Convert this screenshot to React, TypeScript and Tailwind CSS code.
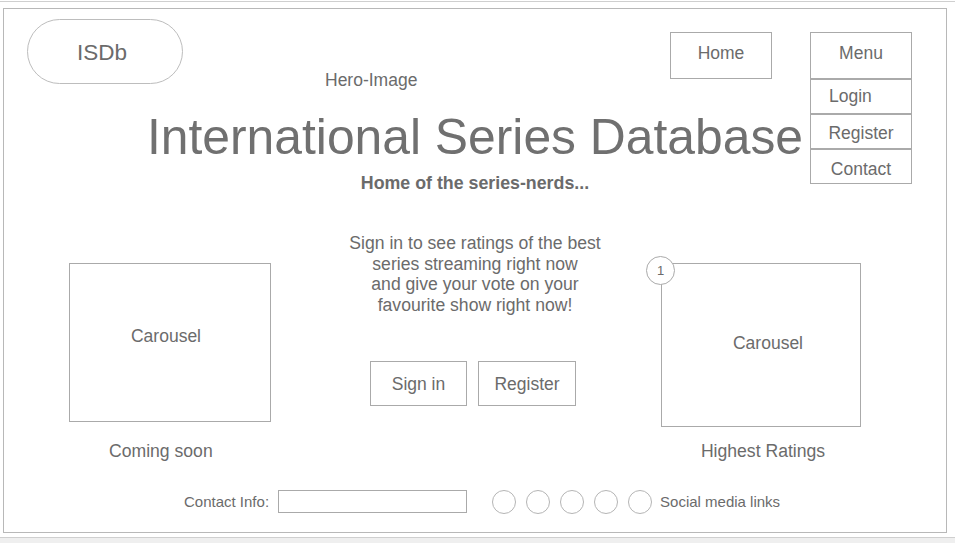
const font = { fontFamily: '"Liberation Sans", Arial, Helvetica, sans-serif' };

const App = () => {
  return (
    <div
      className="w-[955px] h-[543px] bg-white flex flex-col overflow-hidden text-[#6b6b6b]"
      style={font}
    >
      <div className="mt-[1px] h-px bg-[#cfcfcf]" />

      {/* wireframe frame */}
      <div className="ml-[3px] mt-[6px] w-[944px] h-[525px] border border-[#b8b8b8] flex flex-col">
        {/* header */}
        <div className="flex items-start">
          <div className="ml-[23px] mt-[10px] w-[156px] h-[65px] rounded-full border border-[#bdbdbd] flex items-center justify-center text-[22.5px] pt-[2px] pr-[6px]">
            ISDb
          </div>
          <div className="ml-[142px] mt-[61px] text-[17.5px] leading-[20px]">Hero-Image</div>
          <div className="flex-1" />
          <div className="mt-[23px] mr-[38px] w-[102px] h-[47px] border border-[#aaa] flex items-center justify-center text-[17.5px] pb-[4px]">
            Home
          </div>
          <div className="mt-[23px] mr-[34px] w-[102px] relative">
            <div className="h-[47px] border border-[#aaa] flex items-center justify-center text-[17.5px] pb-[4px]">
              Menu
            </div>
            <div className="absolute top-full left-0 w-full flex flex-col text-[17.5px] bg-white">
              <div className="h-[35px] border border-[#aaa] flex items-center pl-[18px]">Login</div>
              <div className="h-[35px] border border-[#aaa] flex items-center justify-center pt-[3px]">Register</div>
              <div className="h-[35px] border border-[#aaa] flex items-center justify-center pt-[6px]">Contact</div>
            </div>
          </div>
        </div>

        {/* title */}
        <h1 className="mt-[22px] text-center text-[49.8px] leading-[50px] whitespace-nowrap text-[#707070]">
          International Series Database
        </h1>
        <p className="mt-[11px] text-center text-[17.8px] leading-[20px] font-bold">Home of the series-nerds...</p>

        {/* middle */}
        <div className="mt-[40px] flex items-start">
          <div className="ml-[65px] w-[202px] flex flex-col">
            <div className="mt-[30px] h-[159px] border border-[#aaa] flex justify-center pt-[62px] pr-[8px] text-[17.5px] leading-[20px]">
              Carousel
            </div>
            <div className="mt-[19px] pl-[40px] text-[17.6px] leading-[20px]">Coming soon</div>
          </div>

          <div className="ml-[74px] w-[260px] flex flex-col items-center">
            <p className="text-center text-[17.6px] leading-[20.5px] whitespace-nowrap">
              Sign in to see ratings of the best
              <br />
              series streaming right now
              <br />
              and give your vote on your
              <br />
              favourite show right now!
            </p>
            <div className="mt-[46px] flex gap-[11px] -ml-[4px]">
              <div className="w-[97px] h-[45px] border border-[#aaa] flex items-center justify-center text-[17.5px] pt-[2px]">
                Sign in
              </div>
              <div className="w-[98px] h-[45px] border border-[#aaa] flex items-center justify-center text-[17.5px] pt-[2px]">
                Register
              </div>
            </div>
          </div>

          <div className="ml-[56px] w-[200px] flex flex-col">
            <div className="relative mt-[30px] h-[164px] border border-[#aaa] flex justify-center pt-[69px] pl-[14px] text-[17.5px] leading-[20px]">
              Carousel
              <div className="absolute -left-[16px] -top-[8px] w-[29px] h-[29px] rounded-full border border-[#aaa] bg-white flex items-center justify-center text-[13px]">
                1
              </div>
            </div>
            <div className="mt-[14px] text-center pl-[4px] text-[17.6px] leading-[20px]">Highest Ratings</div>
          </div>
        </div>

        {/* footer */}
        <div className="mt-[29px] ml-[180px] h-[23px] flex items-center text-[15px]">
          <span className="pt-[2px]">Contact Info:</span>
          <div className="ml-[9px] w-[189px] h-[23px] border border-[#aaa] bg-white" />
          <div className="ml-[25px] flex gap-[10px]">
            {[0, 1, 2, 3, 4].map((i) => (
              <div key={i} className="w-[24px] h-[24px] rounded-full border border-[#b5b5b5]" />
            ))}
          </div>
          <span className="ml-[8px] pt-[2px]">Social media links</span>
        </div>
      </div>

      <div className="mt-[4px] flex-1 border-t border-[#cfcfcf] bg-[#efefef]" />
    </div>
  );
};

export default App;
